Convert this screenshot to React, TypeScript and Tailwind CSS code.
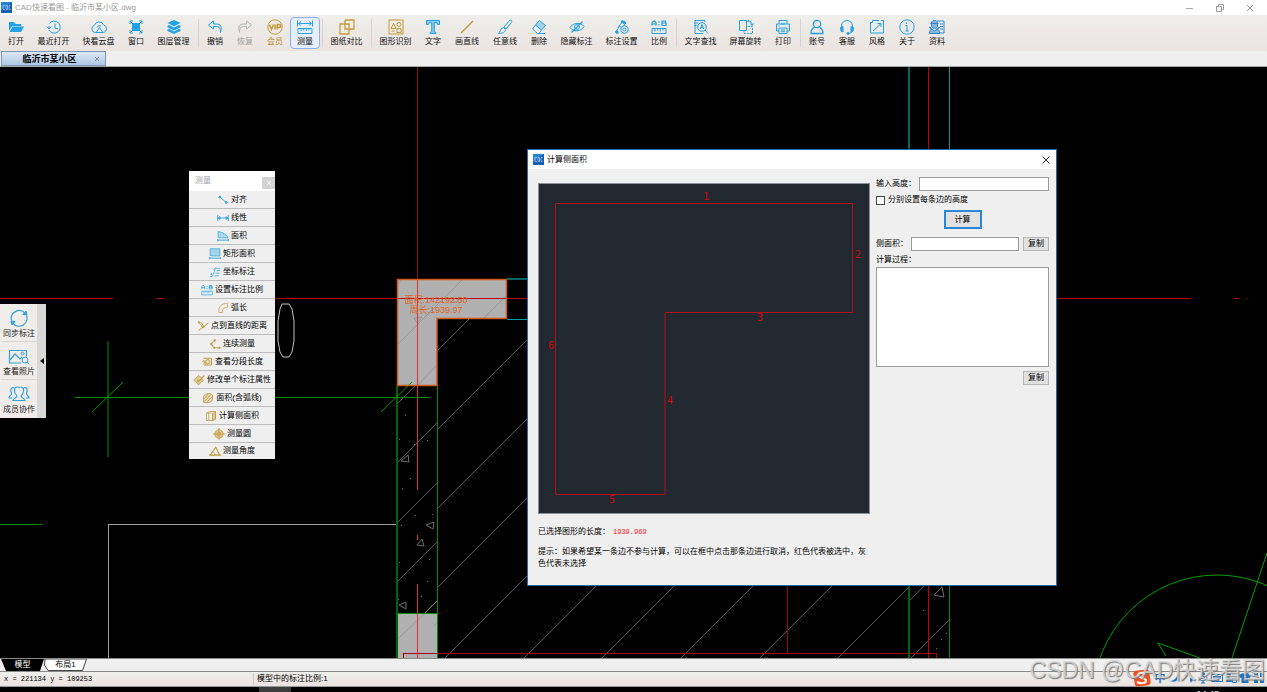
import { ReactNode } from "react";
import clsx from "clsx";

interface GlyphProps {
  name: string;
  className?: string;
}

interface Tool {
  icon: string;
  label: string;
  tone?: "gold" | "muted";
  active?: boolean;
}

const glyphs: Record<string, ReactNode> = {
  open: (
    <g fill="currentColor" stroke="none">
      <path d="M1 3h5l1.5 2H13v2H4L1 12z" />
      <path d="M4.5 7.5H16L13 13H1.5z" />
    </g>
  ),
  recent: (
    <>
      <path d="M3.5 4.5A6 6 0 1 1 3 11" />
      <path d="M.8 7.5 3 10l2.5-2.3M3 9.5V7M9 4.5V9l3 1" />
    </>
  ),
  cloud: (
    <>
      <path d="M4 13.5a3.7 3.7 0 0 1-.6-7.2A5 5 0 0 1 12.800 6a3.900 3.900 0 0 1-.3 7.500z" />
      <path d="M5.500 13l3-4.500 3 4.500M6 8.500a3 3 0 0 1 4-1.500" />
    </>
  ),
  window: (
    <>
      <rect x="4.500" y="4.500" width="7" height="7" fill="currentColor" />
      <path d="M2 5V2h3M11 2h3v3M14 11v3h-3M5 14H2v-3M2 2l3 3M14 2l-3 3M2 14l3-3M14 14l-3-3" />
    </>
  ),
  layers: (
    <g fill="currentColor" stroke="none">
      <path d="M8 1l6.500 3L8 7.200 1.500 4z" />
      <path d="M1.500 6.700l1.500-.7L8 8.500 13 6l1.500.7v1.500L8 11.500 1.500 8.200z" />
      <path d="M1.500 10.500l1.500-.8L8 12.500l5-2.800 1.500.8V12L8 15l-6.500-3z" />
    </g>
  ),
  undo: <path d="M6.500 2 1.500 6l5 4V7.500h3c3 0 4 2 4 6 1.500-5 .5-8.500-4-8.500h-3z" />,
  redo: <path d="M9.500 2l5 4-5 4V7.500h-3c-3 0-4 2-4 6C1 8.500 2 5 6.500 5h3z" />,
  vip: (
    <>
      <circle cx="8" cy="8" r="7.200" />
      <path d="M2.500 5.500l2 5 2-5M8 5.500v5M10.200 10.500v-5h2a1.500 1.500 0 0 1 0 3h-2" strokeWidth="1.500" />
    </>
  ),
  measure: (
    <>
      <path d="M.5 1.500v6M15.500 1.500v6M1.500 4.500h13M4 2.500l-2.500 2L4 6.500M12 2.500l2.500 2-2.500 2" />
      <path d="M1 9.500h14v5H1zM4 9.500v2.500M6.700 9.500v2M9.300 9.500v2.500M12 9.500v2" />
    </>
  ),
  compare: <path d="M6 1h9v9h-5M6 1v4H1v10h9V5H6v5h4" strokeWidth="1.300" />,
  shapes: (
    <>
      <rect x="1" y="1" width="14" height="14" />
      <path d="M3 9.500l2.500-5 2.500 5zM9 9.500h4v4H9z" />
      <circle cx="11" cy="5.500" r="2" />
      <path d="M3.500 12h3" />
    </>
  ),
  text: (
    <path d="M1.500 1.500h13v4h-2l-.5-1.800H9.300v9l1.700.8v1H5v-1l1.700-.8v-9H4l-.5 1.800h-2z" fill="currentColor" fillOpacity=".45" />
  ),
  line: <path d="M2 14 14 2" strokeWidth="1.400" />,
  brush: <path d="M7 8l5.500-6.500c1.500-1 3 .5 2 2L9 10zM6.500 8.500l2 2C8 13 6 14.500 1.500 14.500 3.500 13 3 9.500 6.500 8.500z" />,
  eraser: (
    <>
      <path d="M8.500 1.500l6 5-4 4.500-6-5z" fill="currentColor" fillOpacity=".35" />
      <path d="M4.500 6 1.500 10l5 4.500h1.500l2.500-3.500M7 14.500h7" />
    </>
  ),
  hide: (
    <>
      <path d="M1 8.500c3-5 11-5.500 14-1-3 5.500-11 5.500-14 1z" />
      <circle cx="8" cy="8" r="2.400" />
      <path d="M2.500 13.500l11-11" strokeWidth="1.200" />
    </>
  ),
  markset: (
    <>
      <path d="M2 14l3-7 4-5 3 2-3 3M5 7l2 1M2 14h3" />
      <path d="M8 1.500l4 2-1 1.500-4-2z" fill="currentColor" />
      <path d="M10.500 6.500l3.500 2v4l-3.500 2-3.500-2v-4z" />
      <circle cx="10.500" cy="10.500" r="1.500" />
      <circle cx="2.800" cy="13" r="1.200" fill="currentColor" />
    </>
  ),
  ratio: (
    <>
      <path d="M1 6.500V3.500l1.500-1.500h1L5 3.500v3M1 5h4M11 2h3.500v2H11zM11 4h4v2.500h-4z" strokeWidth="1.200" />
      <path d="M8 2.500v1M8 5.500v1" strokeWidth="1.500" />
      <path d="M1 9.500h14v5H1zM4 9.500v3M6.700 9.500v2M9.300 9.500v3M12 9.500v2" />
    </>
  ),
  find: (
    <>
      <path d="M12 3V1.500H2v13h8M1.500 4h4M1.500 6.500h2" />
      <circle cx="9" cy="8" r="4.300" />
      <path d="M12 11l3 3.500M7.300 10 9 5.500l1.700 4.500M8 8.700h2" />
    </>
  ),
  rotate: (
    <>
      <path d="M1.500 1.500h7v10h-7z" />
      <path d="M6 11.500v3h8.500v-7H9" strokeDasharray="2 1" />
      <path d="M10 2c2.500 0 4 1.500 4 4M12.500 4.500 14 6.500l1.500-2M11 1 9.500 2 11 3.500" />
    </>
  ),
  print: <path d="M4 5V1.500h8V5M4 12H1.500V5h13v7H12M4 9h8v5.500H4zM6 11h4M6 12.700h4M3.500 7h1M6 5h4" />,
  user: (
    <>
      <circle cx="8" cy="5" r="3.700" strokeWidth="1.300" />
      <path d="M5.500 8.200C3 9.500 2 11.500 2 14.500h12c0-3-1-5-3.500-6.300" strokeWidth="1.300" />
    </>
  ),
  service: (
    <>
      <path d="M2.500 9V7a5.500 5.500 0 0 1 11 0v2M13.500 12c-.5 1.500-2 2.500-4.500 2.500" />
      <path d="M1.500 8.500 4 7.500V13l-2-1zM14.500 8.500 12 7.500V13l2-1zM8 13.700h2v1.500H8z" fill="currentColor" />
    </>
  ),
  style: <path d="M10 1.500H3.500M12 1.500h2.500v12.500H1.500V3.500h2v-2M4 12l8-7.500M8.500 4.500H12V8" />,
  about: (
    <>
      <circle cx="8" cy="8" r="7.200" />
      <path d="M6.500 6.500H8V12M6.500 12h3.200" />
      <path d="M7.500 3.500v1.500" strokeWidth="1.400" />
    </>
  ),
  docs: (
    <g stroke="#2f86d6">
      <path d="M8 2h7v12H10M11 5h3M11 7.500h3M11 10h3" />
      <path d="M1.500 4.500h8M2.500 4c0-3.500 6-3.500 6 0v3.500c-1 2.500-5 2.500-6 0zM.5 14.500c0-3 1-4 2.500-4.500L5.500 12 8 10c1.500.5 2.500 1.500 2.500 4.500z" fill="#2f86d6" fillOpacity=".55" />
      <path d="M.5 8l2 2M10.500 8l-2 2" strokeWidth="1.500" />
    </g>
  ),
  align: (
    <>
      <path d="M4 4l8 7" strokeWidth="1.200" />
      <path d="M1.500 5.500l3-3M11.500 13.500l3-3M3 3h2v2H3zM11 10h2v2h-2z" fill="currentColor" />
    </>
  ),
  linear: (
    <>
      <path d="M1 4v8M15 4v8M2 8h12" strokeWidth="1.300" />
      <path d="M1 8l3-2v4zM15 8l-3-2v4z" fill="currentColor" />
    </>
  ),
  area: (
    <>
      <path d="M1.500 10.500V2l6 1.500 7 5v2z" fill="currentColor" fillOpacity=".35" />
      <path d="M1 13.500h14M1 12v3M15 12v3" strokeWidth="1.300" />
    </>
  ),
  rectarea: (
    <>
      <path d="M1.500 1h13v9.500h-13z" fill="currentColor" fillOpacity=".4" />
      <path d="M1 13.500h14M1 12v3M15 12v3" strokeWidth="1.300" />
    </>
  ),
  coord: <path d="M1.500 14h3l4-11H15M10 6h5M8.500 9.500H14M7.500 13H13M3 9v3M2 11h2M6 5l3-3" />,
  arc: (
    <>
      <path d="M2.500 14C2 6 6 1.500 14 2" />
      <path d="M7 14c-.5-4 2-7 7-7M2.500 14H7M14 2v5" />
    </>
  ),
  pointline: (
    <>
      <path d="M2 14 15 4M2 3l6 6M5 3l4 5" strokeWidth="1.300" />
      <circle cx="2.500" cy="3" r="1" fill="currentColor" />
      <path d="M6 8l4 1-2 2z" fill="currentColor" />
    </>
  ),
  chain: (
    <>
      <path d="M8 3 3 8l4 5h7" strokeDasharray="3 1" strokeWidth="1.500" />
      <circle cx="8" cy="3" r="1.100" fill="currentColor" />
      <circle cx="3" cy="8" r="1.100" fill="currentColor" />
      <circle cx="7" cy="13" r="1.100" fill="currentColor" />
      <circle cx="14" cy="13" r="1.100" fill="currentColor" />
    </>
  ),
  segment: (
    <>
      <path d="M3 3h11v9H6" strokeWidth="1.300" />
      <circle cx="9" cy="7.500" r="3" fill="currentColor" fillOpacity=".3" />
      <path d="M1 8l3-2.500V8h3M4 8l3 4H4z" />
    </>
  ),
  modify: (
    <>
      <path d="M1 8l6.500-6 6.500 6-6.500 6.500z" fill="currentColor" fillOpacity=".45" />
      <path d="M5.500 8l2 2L15 2" strokeWidth="1.500" />
    </>
  ),
  arcarea: (
    <>
      <path d="M2 14V6c3-5 9-5 12-2v7l-4 3z" fill="currentColor" fillOpacity=".3" />
      <path d="M2 10l6-7M3 13l9-10M7 13l7-7" />
    </>
  ),
  side: (
    <>
      <path d="M2 4l4-2h8v10l-4 2H2z" />
      <path d="M10 5l4-3v10l-4 2z" fill="currentColor" fillOpacity=".5" />
      <path d="M2 4h8M5 4v10" />
    </>
  ),
  circle: (
    <>
      <circle cx="8" cy="8" r="5.500" fill="currentColor" fillOpacity=".4" strokeWidth="1.300" />
      <path d="M8 0v16M0 8h16" />
      <circle cx="8" cy="8" r="2.500" />
    </>
  ),
  angle: (
    <>
      <path d="M0 13.500h16M1.500 13.500 9 3l5 10" strokeWidth="1.500" />
      <path d="M5 9c2 .5 3 2 3 4.500" />
    </>
  ),
};

const Glyph = ({ name, className = "size-4" }: GlyphProps) => (
  <svg viewBox="0 0 16 16" fill="none" stroke="currentColor" className={clsx("shrink-0", className)} aria-hidden="true">
    {glyphs[name]}
  </svg>
);

const toolGroups: Tool[][] = [
  [
    { icon: "open", label: "打开" },
    { icon: "recent", label: "最近打开" },
    { icon: "cloud", label: "快看云盘" },
    { icon: "window", label: "窗口" },
    { icon: "layers", label: "图层管理" },
  ],
  [
    { icon: "undo", label: "撤销" },
    { icon: "redo", label: "恢复", tone: "muted" },
    { icon: "vip", label: "会员", tone: "gold" },
    { icon: "measure", label: "测量", active: true },
  ],
  [{ icon: "compare", label: "图纸对比" }],
  [
    { icon: "shapes", label: "图形识别" },
    { icon: "text", label: "文字" },
    { icon: "line", label: "画直线" },
    { icon: "brush", label: "任意线" },
    { icon: "eraser", label: "删除" },
    { icon: "hide", label: "隐藏标注" },
    { icon: "markset", label: "标注设置" },
    { icon: "ratio", label: "比例" },
  ],
  [
    { icon: "find", label: "文字查找" },
    { icon: "rotate", label: "屏幕旋转" },
    { icon: "print", label: "打印" },
  ],
  [
    { icon: "user", label: "账号" },
    { icon: "service", label: "客服" },
    { icon: "style", label: "风格" },
    { icon: "about", label: "关于" },
    { icon: "docs", label: "资料" },
  ],
];

const goldIcons = ["vip", "compare", "shapes", "line"];

const measureItems = [
  { icon: "align", label: "对齐" },
  { icon: "linear", label: "线性" },
  { icon: "area", label: "面积" },
  { icon: "rectarea", label: "矩形面积" },
  { icon: "coord", label: "坐标标注" },
  { icon: "ratio", label: "设置标注比例" },
  { icon: "arc", label: "弧长" },
  { icon: "pointline", label: "点到直线的距离" },
  { icon: "chain", label: "连续测量" },
  { icon: "segment", label: "查看分段长度" },
  { icon: "modify", label: "修改单个标注属性" },
  { icon: "arcarea", label: "面积(含弧线)" },
  { icon: "side", label: "计算侧面积" },
  { icon: "circle", label: "测量圆" },
  { icon: "angle", label: "测量角度" },
];

const AppLogo = () => (
  <svg viewBox="0 0 11 11" className="size-[11px] shrink-0" aria-hidden="true">
    <rect width="11" height="11" fill="#1560b5" />
    <path d="M0 0h11L0 8z" fill="#2583d8" />
    <path d="M4 3.500H2v4h2M5 3.500h1.500v4H5zM9.500 3.500H8v4h1.500" fill="none" stroke="#cfe6fb" strokeWidth=".6" />
  </svg>
);

const TitleBar = () => (
  <header className="flex h-[15px] shrink-0 items-center gap-[3px] bg-white pl-px text-[#999]">
    <AppLogo />
    <h1 className="flex-1 text-[8px]">CAD快速看图 - 临沂市某小区.dwg</h1>
    <div className="flex gap-5 pr-3">
      <button aria-label="最小化" className="size-[10px]">
        <svg viewBox="0 0 10 10" stroke="#aaa" fill="none"><path d="M1 5.500h7" /></svg>
      </button>
      <button aria-label="还原" className="size-[10px]">
        <svg viewBox="0 0 10 10" stroke="#999" fill="none"><path d="M1.500 3.500h5v5h-5zM3.500 3.500v-2h5v5h-2" /></svg>
      </button>
      <button aria-label="关闭" className="size-[10px]">
        <svg viewBox="0 0 10 10" stroke="#999" fill="none"><path d="M2 2l6 6M8 2 2 8" /></svg>
      </button>
    </div>
  </header>
);

const ToolButton = ({ icon, label, tone, active }: Tool) => (
  <button
    className={clsx(
      "flex h-8 shrink-0 flex-col items-center gap-0.5 rounded-sm border pt-px",
      label.length === 2 && "w-[30px]",
      label.length === 3 && "w-[38px]",
      label.length === 4 && "w-[45px]",
      active ? "border-[#8eaef0] bg-[#e6eefb]" : "border-transparent",
      tone === "gold" && "text-[#bb8b2c]",
      tone === "muted" && "text-[#9c9c9c]",
    )}
  >
    <span className={clsx(tone === "muted" ? "text-[#b4b4b4]" : goldIcons.includes(icon) ? "text-[#c49a3c]" : "text-[#22a2e6]")}>
      <Glyph name={icon} />
    </span>
    <span className="text-[8px] leading-[10px] whitespace-nowrap">{label}</span>
  </button>
);

const Toolbar = () => (
  <nav className="flex h-9 shrink-0 items-center overflow-hidden bg-linear-to-b from-[#eeeeea] to-[#ebe4e1] pl-px text-[#111]">
    {toolGroups.map((group, i) => (
      <div key={i} className="flex items-center">
        {i > 0 && <span className="mr-px ml-0.5 h-7 w-px bg-[#d6d3d0]" />}
        {group.map((tool) => (
          <ToolButton key={tool.label} {...tool} />
        ))}
      </div>
    ))}
  </nav>
);

const FileTabs = () => (
  <div className="flex h-4 shrink-0 border-b border-[#a3a9a7] bg-[#efefef] pl-px">
    <div className="flex w-[105px] items-center border border-[#7d97b8] bg-linear-to-b from-[#dce8f6] to-[#afc7e3] pr-1 text-black">
      <button className="flex-1 pl-1 text-center text-[9px] leading-3 font-bold">临沂市某小区</button>
      <button aria-label="关闭标签" className="size-2">
        <svg viewBox="0 0 8 8" stroke="#808a96"><path d="M2 2l4 4M6 2 2 6" /></svg>
      </button>
    </div>
  </div>
);

const hatchLines = [
  "M438 350 469 319", "M438 429 528 339", "M438 508 528 418", "M438 587 528 497", "M445 658 528 575",
  "M524 658l74-74", "M602 658l74-74", "M681 658l74-74", "M760 658l74-74", "M838 658l71-71",
  "M397 404 417 384", "M397 463 437 423", "M397 523 437 483", "M397 582 437 542", "M909 601l16-16", "M911 658l38-38",
];

const specks = [
  [405, 415], [399, 439], [414, 444], [427, 440], [410, 478], [402, 488], [415, 515], [432, 514], [401, 525],
  [399, 562], [429, 559], [427, 581], [421, 596], [398, 599], [923, 610], [941, 639], [946, 633], [936, 648],
];

const Drawing = () => (
  <svg className="absolute inset-0 size-full" fill="none" shapeRendering="crispEdges">
    <g transform="translate(0 -67)">
      <g stroke="#5c5c5c" strokeWidth="1" shapeRendering="auto">
        {hatchLines.map((d) => (
          <path key={d} d={d} />
        ))}
        <path d="M401 461l7-6 1 7zM426 525l8-3-1 7zM417 545l5-6 2 7zM399 605l7-3 0 7zM934 595l8-8 2 10z" stroke="#707070" />
      </g>
      {specks.map(([x, y]) => (
        <rect key={`${x}-${y}`} x={x} y={y} width="1" height="1" fill="#777" />
      ))}

      <path d="M108.500 658V524H397" stroke="#a0a0a0" />
      <path d="M282 304h7l3 5 2 12v20l-2 11-3 5h-6l-3-5-2-11v-20l2-12z" stroke="#c4c4c4" shapeRendering="auto" />

      <path d="M397 279h110v40h-70v67h-40z" fill="#b0b0b0" />
      <path d="M397 613h40v45h-40z" fill="#b0b0b0" />
      <path d="M397 345l66-66M397 285l6-6M483 319l24-24M417 386l20-21M397 640l40-39M414 318l8-1-5 6zM451 302l5-5 2 5zM434 626l3-3" stroke="#979797" shapeRendering="auto" />

      <g stroke="#008080" shapeRendering="auto">
        <path d="M909 67v90M507 279h21" stroke="#006666" strokeWidth="2" />
        <path d="M949.500 67v90M507 319.500h21" stroke="#00a0a0" />
      </g>

      <g stroke="#c00000">
        <path d="M417.500 279v211M417.500 535v5M417.500 584v74" stroke="#e03030" />
        <path d="M417.500 67v212" stroke="#8a1010" />
        <path d="M0 298.500h113M157 298.500h6M204 298.500h324M1056 298.500h135M1234 298.500h5" />
        <path d="M928.500 67v591" />
        <path d="M403.500 658v-4.500H936.500v4.500M787.500 585v68" stroke="#a80000" />
      </g>

      <g stroke="#00a000" shapeRendering="auto">
        <path d="M397 386v272M909 585v73" stroke="#006600" strokeWidth="2" />
        <path d="M437.500 386v272M397 613.500h40M949.500 585v73" stroke="#009000" />
        <path d="M75 397.500h355M108 341v116M0 524.500h42" stroke="#009000" />
        <path d="M92 412l31-30M381 412l31-30" />
        <circle cx="1217" cy="699" r="124" />
        <path d="M1232 658l35-105M1166 656l-8-13 42 15" />
      </g>

      <path d="M397.500 279.500h109v39h-69.500v67h-39.500z" stroke="#cf5a1e" strokeWidth="1.500" shapeRendering="auto" />
      <g fill="#e0641f" stroke="none" className="text-[9px]" textAnchor="middle">
        <text x="436" y="303">面积:142192.50</text>
        <text x="436" y="313">周长:1939.97</text>
      </g>
    </g>
  </svg>
);

const SidePanel = () => (
  <aside className="absolute top-[237px] left-0 flex w-[46px] bg-[#d8d8d8]">
    <div className="flex flex-1 flex-col bg-[#f0ecea] pl-px text-[#222]">
      <button className="flex h-[38px] flex-col items-center border-b border-[#d5d5d8] pt-1">
        <svg viewBox="0 0 22 20" className="h-5 w-[22px]" fill="none" stroke="#36a3dc">
          <path d="M3.500 12.500A8 8 0 0 1 17 5M18.500 7.500A8 8 0 0 1 5 15.500" strokeWidth="1.300" />
          <path d="M18 3l1 4-4-.5zM4 17l-1-4 4 .5z" fill="#36a3dc" />
        </svg>
        <span className="text-[8px] leading-[12px]">同步标注</span>
      </button>
      <button className="flex h-[38px] flex-col items-center border-b border-[#d5d5d8] pt-1">
        <svg viewBox="0 0 22 20" className="h-5 w-[22px]" fill="none" stroke="#36a3dc">
          <path d="M13 17H1.500V4.500h17v6M2 14l5-6 5 5 2-2" strokeWidth="1.200" />
          <circle cx="14.500" cy="7.500" r="1.500" />
          <circle cx="17" cy="14" r="3" />
          <path d="M19 16l2 2.500" />
        </svg>
        <span className="text-[8px] leading-[12px]">查看照片</span>
      </button>
      <button className="flex h-[38px] flex-col items-center pt-1">
        <svg viewBox="0 0 22 20" className="h-5 w-[22px]" fill="none" stroke="#36a3dc" strokeWidth="1.200">
          <path d="M9 12c-4-4-3-9 .5-9 1 0 2 .5 2.500 1M9 12c0 2-3 1.500-4 4.500h12c-1-3-4-2.500-4-4.500 4-4 3-9-.5-9M6.500 4C3 2.500 2 6 3.500 9c1 3-2.500 2-2.500 5h3M15.500 4C19 2.500 20 6 18.500 9c-1 3 2.500 2 2.500 5h-3" />
        </svg>
        <span className="text-[8px] leading-[12px]">成员协作</span>
      </button>
    </div>
    <button aria-label="收起" className="flex w-[9px] items-center justify-center">
      <svg viewBox="0 0 4 6" className="h-1.5 w-1" fill="#000"><path d="M4 0v6L0 3z" /></svg>
    </button>
  </aside>
);

const MeasureMenu = () => (
  <section className="absolute top-[104px] left-[189px] w-[86px] bg-[#efefef] text-black">
    <div className="flex h-5 items-center justify-between bg-white pl-1.5">
      <h2 className="text-[8px] text-[#a2a2a2]">测量</h2>
      <button aria-label="关闭测量" className="mt-1 flex h-3 w-[13px] items-center justify-center bg-[#d3d3d3]">
        <svg viewBox="0 0 4 4" className="size-1" stroke="#f4f4f4"><path d="M0 0l4 4M4 0 0 4" /></svg>
      </button>
    </div>
    <ul>
      {measureItems.map(({ icon, label }, i) => (
        <li key={label} className="flex h-[18px] border-b border-[#bdbdbd] last:h-4 last:border-b-0">
          <button className="flex w-full items-center justify-center gap-0.5 whitespace-nowrap">
            <span className={i < 6 ? "text-[#36a9e1]" : "text-[#c49a3c]"}>
              <Glyph name={icon} className="size-3" />
            </span>
            <span className="text-[8px] leading-3">{label}</span>
          </button>
        </li>
      ))}
    </ul>
  </section>
);

const edgeLabels = [
  { n: 1, x: 168, y: 17 },
  { n: 2, x: 320, y: 75 },
  { n: 3, x: 222, y: 138 },
  { n: 4, x: 132, y: 221 },
  { n: 5, x: 74, y: 320 },
  { n: 6, x: 13, y: 166 },
];

const AreaDialog = () => (
  <section role="dialog" aria-labelledby="dlg-title" className="absolute top-[82px] left-[527px] w-[530px] border border-[#1d6da8] bg-[#efefef] text-[8px] leading-3 text-black">
    <div className="flex h-[19px] items-center gap-[3px] bg-white pr-1.5 pl-[5px]">
      <AppLogo />
      <h2 id="dlg-title" className="flex-1">计算侧面积</h2>
      <button aria-label="关闭" className="size-2">
        <svg viewBox="0 0 8 8" stroke="#333"><path d="M.5.5l7 7M7.500.5l-7 7" /></svg>
      </button>
    </div>
    <div className="flex gap-1.5 pt-2 pr-[7px] pb-[15px] pl-[10px]">
      <div className="mt-1.5 w-[332px]">
        <svg viewBox="0 0 332 331" className="block w-full" fontFamily="'DejaVu Sans Mono'" fontSize="10">
          <rect x=".5" y=".5" width="331" height="330" fill="#222930" stroke="#8b9197" />
          <path d="M17.500 20.500h297v109h-187.500v182h-109.500z" fill="none" stroke="#b01217" />
          {edgeLabels.map(({ n, x, y }) => (
            <text key={n} x={x} y={y} fill="#d0090f" textAnchor="middle">{n}</text>
          ))}
        </svg>
        <p className="mt-3 flex gap-[3px]">
          已选择图形的长度：
          <span className="font-['Liberation_Mono'] text-[7px] text-[#ff2020]">1939.969</span>
        </p>
        <p className="mt-2">提示：如果希望某一条边不参与计算，可以在框中点击那条边进行取消，红色代表被选中，灰色代表未选择</p>
      </div>
      <form className="flex min-w-0 flex-1 flex-col" onSubmit={(e) => e.preventDefault()}>
        <div className="flex h-3.5 items-center gap-[3px]">
          <label htmlFor="height" className="whitespace-nowrap">输入高度：</label>
          <input id="height" className="h-3.5 min-w-0 flex-1 border border-[#9a9a9a] bg-white" />
        </div>
        <label className="mt-1 flex h-2.5 items-center gap-[3px]">
          <input type="checkbox" className="size-[9px] appearance-none border border-[#444] bg-white" />
          分别设置每条边的高度
        </label>
        <button className="mt-[5px] h-[19px] w-[38px] self-center border-2 border-[#2a86d8] bg-[#e1e1e1]">计算</button>
        <div className="mt-2 flex h-3.5 items-center gap-[3px]">
          <label htmlFor="side" className="whitespace-nowrap">侧面积：</label>
          <input id="side" className="h-3.5 min-w-0 flex-1 border border-[#9a9a9a] bg-white" />
          <button type="button" className="ml-px h-3.5 w-[26px] border border-[#b5b5b5] bg-[#e1e1e1]">复制</button>
        </div>
        <label htmlFor="steps" className="mt-[3px]">计算过程：</label>
        <textarea id="steps" className="mt-px h-[100px] resize-none border border-[#9a9a9a] bg-white" />
        <button type="button" className="mt-1 h-3.5 w-[26px] self-end border border-[#b5b5b5] bg-[#e1e1e1]">复制</button>
      </form>
    </div>
  </section>
);

const LayoutTabs = () => (
  <div className="flex h-3.5 shrink-0 border-y border-[#8a8a8a] bg-[#efefef] pl-px text-[8px] leading-3">
    <button className="relative w-[43px] text-white">
      <svg viewBox="0 0 43 12" className="absolute inset-0 h-3 w-[43px]"><path d="M0 0h43l-4 12H5z" /></svg>
      <span className="relative">模型</span>
    </button>
    <button className="relative w-[43px] text-black">
      <svg viewBox="0 0 43 12" className="absolute inset-0 h-3 w-[43px]">
        <path d="M1 0h41.500l-4 11.500H4L.5 6z" fill="#fff" stroke="#444" />
      </svg>
      <span className="relative">布局1</span>
    </button>
  </div>
);

const StatusBar = () => (
  <footer className="flex h-[15px] shrink-0 items-center border-b border-[#999] bg-linear-to-b from-[#eeeeea] to-[#e9e3e0] text-[8px] text-black">
    <span className="w-[254px] border-r border-[#ccc] pl-1 font-['Liberation_Mono'] text-[7px] leading-3">x = 221134 y = 109253</span>
    <span className="pl-[3px] leading-3">模型中的标注比例:1</span>
  </footer>
);

const InputTray = () => (
  <div className="absolute right-0 bottom-[5px] flex items-center gap-0.5 pr-0.5 text-[#1a72c8]">
    <svg viewBox="0 0 18 18" className="size-[18px]">
      <rect x="1" y="1" width="16" height="16" rx="3" fill="#f04e1f" transform="rotate(-8 9 9)" />
      <path d="M13 4.500C9 3 5 4 5 6.500s8 2 8 5-5 3.500-9 1.500" fill="none" stroke="#fff" strokeWidth="2" />
    </svg>
    <span className="w-[14px] text-center text-[11px] leading-3 font-bold">中</span>
    <svg viewBox="0 0 12 12" className="size-3" fill="currentColor"><path d="M9 1c3 5-2 11-8 8 4 0 7-3 8-8z" /></svg>
    <svg viewBox="0 0 12 12" className="size-3" fill="currentColor"><circle cx="3" cy="4" r="1.500" /><path d="M7 6h3c0 3-1 4-3 5 1-1 1-2 0-2z" /></svg>
    <svg viewBox="0 0 12 12" className="size-3" fill="currentColor"><rect x="4" y="0" width="4" height="7" rx="2" /><path d="M2 5c0 5 8 5 8 0M6 9v2M4 11h4" fill="none" stroke="currentColor" /></svg>
    <svg viewBox="0 0 12 12" className="size-3" fill="none" stroke="currentColor"><path d="M.5 2.500h11v7H.5zM2 4.500h8M2 6h8M3.500 8h5" /></svg>
    <svg viewBox="0 0 12 12" className="size-3" fill="currentColor"><circle cx="4" cy="3" r="2" /><path d="M1 10c0-6 6-6 6 0z" /><path d="M7.500 6.500h4v4h-4z" fill="none" stroke="currentColor" /></svg>
    <svg viewBox="0 0 12 12" className="size-3" fill="currentColor"><path d="M4 1c1 1 3 1 4 0l4 2-1 3-1.500-.5V11h-7V5.500L1 6 0 3z" /></svg>
    <svg viewBox="0 0 12 12" className="size-3" fill="currentColor"><path d="M1 1h4v4H1zM7 1h4v4H7zM1 7h4v4H1zM7 7h4v4H7z" /></svg>
  </div>
);

export default function App() {
  return (
    <div className="relative flex h-screen flex-col overflow-hidden bg-black font-['Liberation_Sans','Noto_Sans_CJK_SC',sans-serif]">
      <TitleBar />
      <Toolbar />
      <FileTabs />
      <main className="relative min-h-0 flex-1 overflow-hidden bg-black">
        <Drawing />
        <SidePanel />
        <MeasureMenu />
        <AreaDialog />
      </main>
      <LayoutTabs />
      <StatusBar />
      <div className="flex h-[5px] shrink-0 overflow-hidden bg-black pl-[259px]">
        <span className="h-full w-8 bg-[#3c3c3c]" />
        <span className="mt-0.5 mr-12 ml-auto text-[9px] leading-[10px] text-white">14:48</span>
      </div>
      <InputTray />
      <p className="pointer-events-none absolute right-[2px] bottom-[8px] text-[23px] leading-7 whitespace-nowrap text-[#d8d8d8]/80 [text-shadow:1px_1px_1px_#777]">
        CSDN @CAD快速看图
      </p>
    </div>
  );
}
